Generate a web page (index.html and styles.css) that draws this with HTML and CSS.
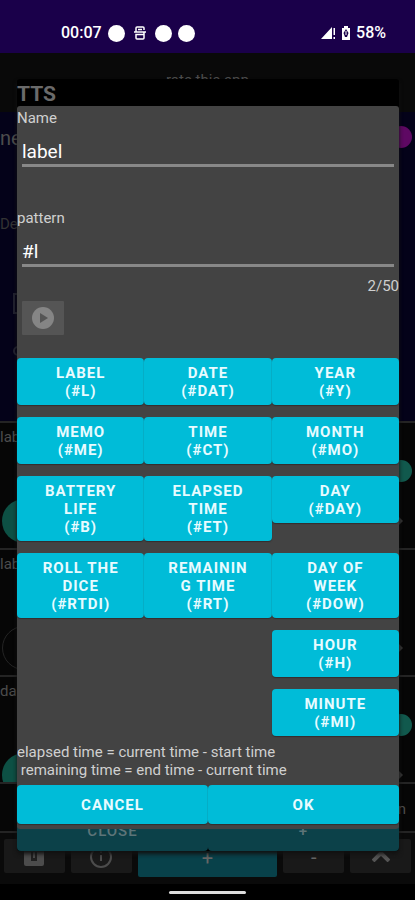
FILE: index.html
```html
<!DOCTYPE html>
<html lang="en">
<head>
<meta charset="utf-8">
<meta name="viewport" content="width=device-width, initial-scale=1">
<title>TTS</title>
<link rel="stylesheet" href="styles.css">
</head>
<body>
<div class="screen">
  <header class="status">
    <div class="status-group">
      <span>00:07</span>
      <i class="dot"></i>
      <svg class="status-s" width="12" height="14" viewBox="0 0 12 14" fill="none" stroke="currentColor" stroke-width="1.500"><path d="M10 4V2q0-1-1-1H3Q2 1 2 2v3q0 1 1 1h6q1 0 1 1v5q0 1-1 1H3q-1 0-1-1V8.500h8M0 6h12M4 3.500h4"/></svg>
      <i class="dot"></i>
      <i class="dot"></i>
    </div>
    <div class="status-group status-right">
      <svg width="15" height="14" viewBox="0 0 15 14" fill="currentColor"><path d="M0 13L11 1v12zM12.500 2H14v7h-1.500zM12.500 11H14v2h-1.500z"/></svg>
      <svg width="10" height="14" viewBox="0 0 10 14"><path fill="currentColor" d="M3 0h4v2h2v12H1V2h2z"/><path fill="#1a004a" d="M5 3l2.500 4-1.500 4H4L2.500 7z"/><path fill="currentColor" d="M4.500 5h1v4h-1z"/></svg>
      <span>58%</span>
    </div>
  </header>

  <main class="app">
    <div class="rate">rate this app</div>
    <section class="hero">
      <div class="hero-head"><span>ne</span><i class="knob knob-pink"></i></div>
      <div class="hero-sub">De</div>
      <svg class="hero-marks" width="8" height="66" viewBox="0 0 8 66" fill="none" stroke="#222230" stroke-width="2"><path d="M8 1H3v19h5"/><circle cx="7" cy="58" r="4"/></svg>
    </section>
    <section class="item">
      <span>label</span>
      <i class="knob knob-green"></i>
      <div class="item-foot"><i class="round"></i><svg width="4" height="8" viewBox="0 0 4 8"><path d="M0 0l4 4-4 4z" fill="#333"/></svg></div>
    </section>
    <section class="item">
      <span>label</span>
      <i class="knob"></i>
      <div class="item-foot"><i class="round round-off"></i><svg width="4" height="8" viewBox="0 0 4 8"><path d="M0 0l4 4-4 4z" fill="#333"/></svg></div>
    </section>
    <section class="item item-cut">
      <span>da</span>
      <i class="knob knob-green"></i>
      <div class="item-foot"><i class="round"></i><svg width="4" height="8" viewBox="0 0 4 8"><path d="M0 0l4 4-4 4z" fill="#333"/></svg></div>
    </section>
    <div class="tail">n</div>
    <nav class="tools">
      <button type="button" aria-label="Save"><svg width="20" height="18" viewBox="0 0 20 18"><path fill="#4c4c4c" d="M0 0h20v16q0 2-2 2H2q-2 0-2-2z"/><path fill="#202020" d="M7 4h6v9H7z"/><path fill="#4c4c4c" d="M9 4h2v6H9z"/></svg></button>
      <button type="button" aria-label="Info"><svg width="22" height="22" viewBox="0 0 22 22" fill="none" stroke="#4c4c4c" stroke-width="2"><circle cx="11" cy="11" r="10"/><path d="M11 5v2M11 9v6"/></svg></button>
      <button type="button" class="tool-add">+</button>
      <button type="button">-</button>
      <button type="button" aria-label="Up"><svg width="18" height="10" viewBox="0 0 18 10" fill="none" stroke="#555" stroke-width="4"><path d="M1 9l7-7h2l7 7"/></svg></button>
    </nav>
    <div class="gesture"><i></i></div>
  </main>

  <section class="under">
    <h1>TTS</h1>
    <div class="under-body"></div>
    <div class="pair under-pair"><button type="button">CLOSE</button><button type="button">+</button></div>
  </section>

  <form class="dialog">
    <label for="name">Name</label>
    <input id="name" type="text" value="label">
    <label for="pattern">pattern</label>
    <input id="pattern" class="last" type="text" value="#l" maxlength="50">
    <div class="count">2/50</div>
    <button type="button" class="play" aria-label="Play"><svg width="22" height="22" viewBox="0 0 22 22"><circle cx="11" cy="11" r="11" fill="#858585"/><path d="M8 6l8 5-8 5z" fill="#555"/></svg></button>
    <div class="tokens">
      <button type="button">LABEL<br>(#L)</button>
      <button type="button">DATE<br>(#DAT)</button>
      <button type="button">YEAR<br>(#Y)</button>
      <button type="button">MEMO<br>(#ME)</button>
      <button type="button">TIME<br>(#CT)</button>
      <button type="button">MONTH<br>(#MO)</button>
      <button type="button">BATTERY LIFE<br>(#B)</button>
      <button type="button">ELAPSED TIME<br>(#ET)</button>
      <button type="button">DAY<br>(#DAY)</button>
      <button type="button">ROLL THE DICE<br>(#RTDI)</button>
      <button type="button">REMAINING TIME<br>(#RT)</button>
      <button type="button">DAY OF WEEK<br>(#DOW)</button>
      <button type="button" class="third">HOUR<br>(#H)</button>
      <button type="button" class="third">MINUTE<br>(#MI)</button>
    </div>
    <p class="note">elapsed time = current time - start time
 remaining time = end time - current time</p>
    <div class="pair"><button type="button">CANCEL</button><button type="button">OK</button></div>
  </form>
</div>
</body>
</html>
```
FILE: styles.css
```css
* { box-sizing: border-box; }

body {
  margin: 0;
  background: #000;
  color: #d0d0d0;
  font-family: Roboto, "Liberation Sans", sans-serif;
  font-size: 15px;
  line-height: 18px;
}

button, input { font: inherit; border: 0; margin: 0; }
i, svg { display: block; flex: none; }

.screen {
  position: relative;
  display: flex;
  flex-direction: column;
  min-height: 100vh;
  overflow: hidden;
}

.status {
  display: flex;
  justify-content: space-between;
  height: 53px;
  padding: 13px 29px 0 61px;
  background: #1a004a;
  color: #fff;
  font-size: 16px;
  font-weight: 500;
}
.status-group { display: flex; align-items: center; gap: 6px; height: 40px; }
.status-right { gap: 5px; }
.status-s { margin: 0 3px; }
.dot { width: 17px; height: 17px; border-radius: 50%; background: #fff; }

.app {
  display: flex;
  flex: 1;
  flex-direction: column;
  background: #060606;
  color: #4c4c4c;
}
.rate { height: 59px; padding-top: 18px; background: #090909; text-align: center; }

.hero { height: 309px; padding: 14px 3px 0 0; background: #040219; }
.hero-head { display: flex; justify-content: space-between; font-size: 20px; line-height: 24px; }
.hero-sub { padding-top: 65px; color: #333; }
.hero-marks { margin: 60px 0 0 11px; }
.knob { width: 22px; height: 22px; border-radius: 50%; }
.knob-pink { background: #5e0863; }
.knob-green { background: #11594d; }

.item {
  display: flex;
  flex-direction: column;
  flex: none;
  height: 127px;
  padding: 5px 3px 0 0;
  border-top: 2px solid #242424;
  overflow: hidden;
}
.item .knob { align-self: flex-end; margin-top: 14px; }
.item-cut { height: 107px; }
.item-foot {
  display: flex;
  flex: none;
  align-items: center;
  justify-content: space-between;
  margin-top: 17px;
  padding: 0 9px 0 2px;
}
.round { width: 44px; height: 44px; border-radius: 50%; background: #0d5044; }
.round-off { background: none; border: 1px solid #242424; }
.tail {
  flex: 1;
  padding: 16px 9px 0;
  border-top: 2px solid #242424;
  border-bottom: 2px solid #242424;
  text-align: right;
}

.tools {
  display: grid;
  grid-template-columns: 61fr 61fr 140fr 61fr 61fr;
  gap: 6px;
  height: 51px;
  padding: 6px 4px 0;
  background: #0a0a0a;
}
.tools button {
  display: flex;
  align-items: center;
  justify-content: center;
  height: 34px;
  padding: 2px 0 0;
  border-radius: 2px;
  background: #191919;
  color: #666;
  font-size: 20px;
}
.tools .tool-add { height: 38px; padding: 0; background: #08414a; }
.gesture { display: flex; justify-content: center; height: 16px; padding-top: 7px; background: #000; }
.gesture i { width: 77px; height: 3px; border-radius: 2px; background: #ddd; }

.under {
  position: absolute;
  top: 79px;
  right: 16px;
  bottom: 49px;
  left: 17px;
  display: flex;
  flex-direction: column;
  border-radius: 3px;
  background: #000;
  box-shadow: 0 3px 4px #111;
}
.under h1 { margin: 0; color: #6a6a6a; font-size: 21px; font-weight: 700; line-height: 30px; }
.under-body { flex: 1; }

.dialog {
  position: absolute;
  top: 106px;
  right: 16px;
  left: 17px;
  padding: 3px 0 5px;
  border-radius: 3px;
  background: #434343;
}
.dialog label { display: block; }
.dialog input {
  display: block;
  width: calc(100% - 10px);
  height: 36px;
  margin: 4px 5px 42px;
  padding: 8px 0 0;
  border-bottom: 3px solid #888;
  outline: 0;
  background: none;
  color: #fff;
  font-size: 19px;
}
.dialog input.last { margin-bottom: 10px; }
.count { text-align: right; }
.play {
  display: flex;
  align-items: center;
  justify-content: center;
  width: 42px;
  height: 34px;
  margin: 6px 5px 23px;
  padding: 0;
  border-radius: 1px;
  background: #555;
}

.tokens {
  display: grid;
  grid-template-columns: repeat(3, 1fr);
  align-items: start;
  gap: 12px 0;
}
.tokens button, .pair button {
  border-radius: 4px;
  background: #00bcd8;
  box-shadow: 0 1px 1px #332e2e;
  color: #e8fbff;
  font-weight: 700;
  letter-spacing: 1px;
}
.tokens button { padding: 6px 20px 5px; overflow-wrap: anywhere; }
.tokens .third { grid-column: 3; }

.note { margin: 7px 0 6px; white-space: pre-wrap; }

.pair { display: grid; grid-template-columns: 1fr 1fr; }
.pair button { height: 39px; padding: 0; }
.under-pair button { height: 41px; background: #0c4149; box-shadow: none; color: #5d7478; font-weight: 500; }
```
